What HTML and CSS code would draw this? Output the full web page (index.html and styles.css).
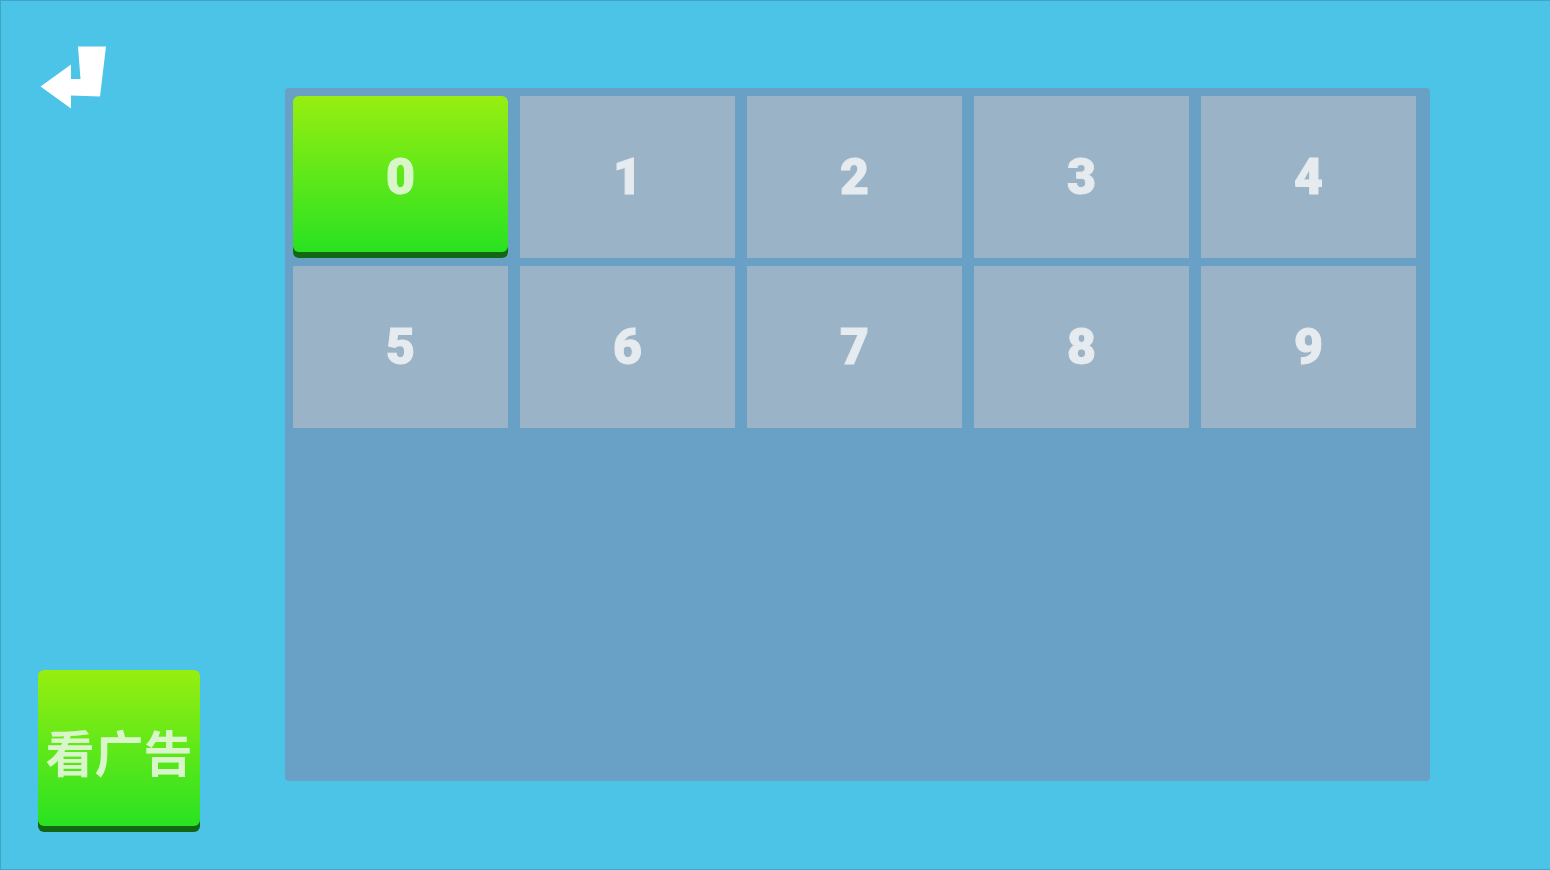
FILE: index.html
```html
<!DOCTYPE html>
<html lang="zh-CN">
<head>
<meta charset="utf-8">
<meta name="viewport" content="width=device-width, initial-scale=1">
<title>0 – 9</title>
<link rel="stylesheet" href="styles.css">
</head>
<body>
<div class="screen">
  <aside class="side">
    <button class="back" type="button" aria-label="返回">
      <svg viewBox="0 0 68 64" width="68" height="64" aria-hidden="true"><path fill="#fff" d="M38 1.500H66L60 51.500L31 50.500V63.500L.5 41.500L31 19.500V34H40.500Z"/></svg>
    </button>
    <button class="key key-green ad" type="button">看广告</button>
  </aside>
  <main class="panel">
    <button class="key key-green level" type="button">0</button>
    <button class="key level" type="button">1</button>
    <button class="key level" type="button">2</button>
    <button class="key level" type="button">3</button>
    <button class="key level" type="button">4</button>
    <button class="key level" type="button">5</button>
    <button class="key level" type="button">6</button>
    <button class="key level" type="button">7</button>
    <button class="key level" type="button">8</button>
    <button class="key level" type="button">9</button>
  </main>
</div>
</body>
</html>
```
FILE: styles.css
```css
* {
  box-sizing: border-box;
}

body {
  margin: 0;
}

.screen {
  display: grid;
  grid-template-columns: 284px 1fr;
  min-height: 100vh;
  padding-right: 120px;
  border: 1px solid #3ea5c4;
  border-right: 0;
  background: #4cc4e7;
}

.side {
  display: flex;
  flex-direction: column;
  justify-content: space-between;
  align-items: flex-start;
  padding: 44px 0 37px 37px;
}

.back {
  padding: 0;
  margin-left: 2px;
  border: 0;
  background: none;
  cursor: pointer;
}

.back svg {
  display: block;
}

.panel {
  display: grid;
  grid-template-columns: repeat(5, 1fr);
  grid-auto-rows: 162px;
  align-content: start;
  gap: 8px 12px;
  margin: 87px 0 88px;
  padding: 8px 14px 8px 8px;
  border-radius: 4px;
  background: #69a0c5;
}

.key {
  padding: 0;
  border: 0;
  background: #9ab3c7;
  color: #e5ebef;
  cursor: pointer;
}

.key-green {
  position: relative;
  isolation: isolate;
  border-radius: 6px;
  background: linear-gradient(transparent 50%, #126712 50%);
  color: #d8f6ca;
}

/* Lit face, above the dark bottom lip */
.key-green::before {
  content: "";
  position: absolute;
  inset: 0 0 6px;
  z-index: -1;
  border-radius: 6px;
  background: linear-gradient(#97ee10, #29e222);
}

.level {
  font: 900 50px/1 Roboto, "Liberation Sans", sans-serif;
  -webkit-text-stroke: 1px currentColor;
}

.ad {
  width: 162px;
  height: 162px;
  padding-bottom: 2px;
  font: 700 49px/1 "Noto Sans CJK SC", sans-serif;
}
```
